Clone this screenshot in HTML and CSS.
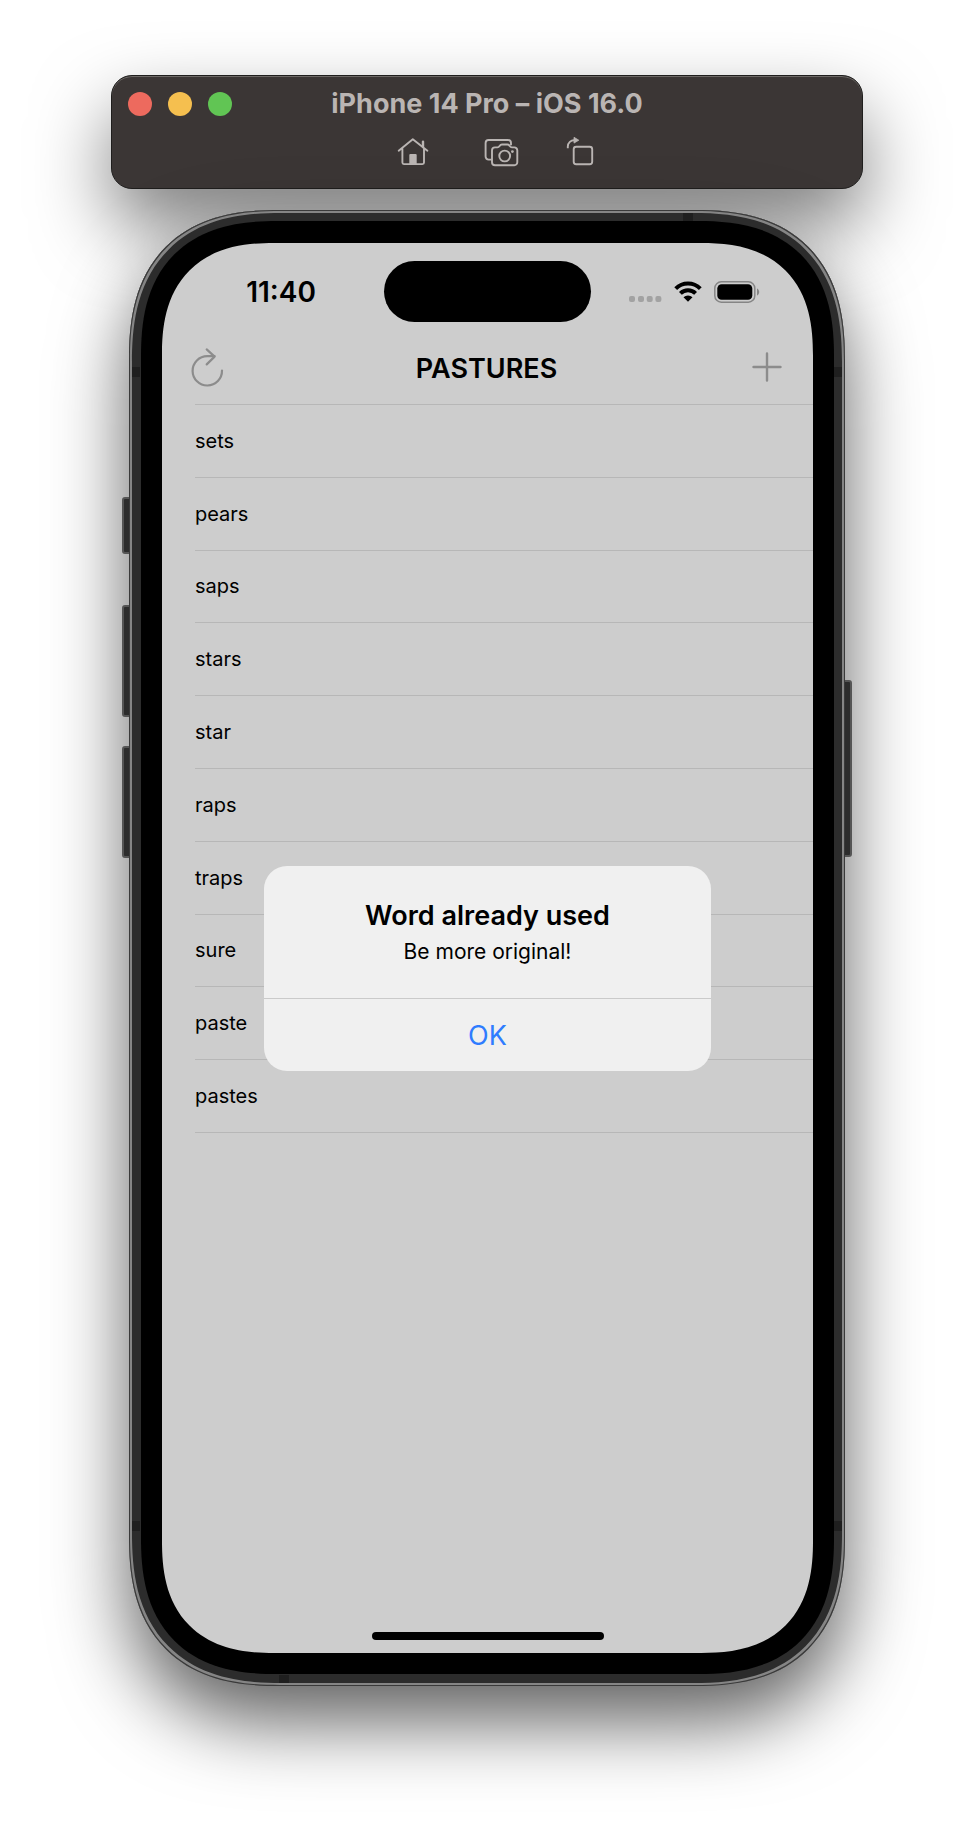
FILE: index.html
```html
<!DOCTYPE html>
<html lang="en">
<head>
<meta charset="utf-8">
<meta name="viewport" content="width=device-width, initial-scale=1">
<title>iPhone 14 Pro – iOS 16.0</title>
<link rel="stylesheet" href="styles.css">
</head>
<body>
<main class="desktop">
  <header class="toolbar">
    <div class="titlebar">
      <div class="lights">
        <button class="light light-close" aria-label="Close"></button>
        <button class="light light-min" aria-label="Minimize"></button>
        <button class="light light-zoom" aria-label="Zoom"></button>
      </div>
      <h1 class="window-title">iPhone 14 Pro – iOS 16.0</h1>
    </div>
    <div class="tools">
      <button class="tool" aria-label="Home">
        <svg width="40" height="32" viewBox="0 0 40 32" fill="none" stroke="currentColor" stroke-width="1.9" stroke-linecap="round" stroke-linejoin="round"><path d="M1.7 14.7 15.8 3.2 30.4 14.7M5.4 12.5V26.6a1.5 1.5 0 0 0 1.5 1.5H25.5a1.5 1.5 0 0 0 1.5-1.5V12.5"/><path d="M12.3 28.5V19a1 1 0 0 1 1-1h5.4a1 1 0 0 1 1 1v9.5z" fill="currentColor" stroke="none"/><path d="M26 5.7v5.3" stroke-width="2.4"/></svg>
      </button>
      <button class="tool" aria-label="Screenshot">
        <svg width="35" height="32" viewBox="0 0 35 32" fill="none" stroke="currentColor" stroke-width="1.9" stroke-linejoin="round"><path d="M8.2 23.6H4.6a3 3 0 0 1-3-3V7a3 3 0 0 1 3-3H24a3 3 0 0 1 3 3v2.2"/><path d="M8 14.4a3 3 0 0 1 3-3h2.4c1 0 1.6-.5 2.2-1.4.6-.9 1.3-1.5 2.3-1.5h5.5c1 0 1.7.6 2.3 1.5.6.9 1.2 1.4 2.200 1.4h2.4a3 3 0 0 1 3 3v11.9a3 3 0 0 1-3 3H11a3 3 0 0 1-3-3z"/><circle cx="20.7" cy="20" r="5.4"/><circle cx="28.4" cy="15.6" r="1.4" fill="currentColor" stroke="none"/></svg>
      </button>
      <button class="tool" aria-label="Rotate">
        <svg width="28" height="32" viewBox="0 0 28 32" fill="none" stroke="currentColor" stroke-width="1.9"><rect x="7.7" y="10.8" width="18.5" height="17.5" rx="2.5"/><path d="M1.8 12.2V10.5A6.3 6.3 0 0 1 8.600 4.2"/><path d="M8 1.3 12.8 4.2 8 7.1z" fill="currentColor" stroke-width=".8" stroke-linejoin="round"/></svg>
      </button>
    </div>
  </header>

  <section class="phone" aria-label="iPhone simulator">
    <span class="key key-mute"></span>
    <span class="key key-up"></span>
    <span class="key key-down"></span>
    <span class="key key-power"></span>
    <div class="frame">
      <span class="band band-side band-left band-high"></span>
      <span class="band band-side band-right band-high"></span>
      <span class="band band-side band-left band-low"></span>
      <span class="band band-side band-right band-low"></span>
      <span class="band band-cap band-top"></span>
      <span class="band band-cap band-bottom"></span>
      <div class="bezel">
        <div class="screen">
          <div class="status">
            <time class="clock">11:40</time>
            <span class="island"></span>
            <div class="indicators">
              <svg width="34" height="22" viewBox="0 0 34 22" fill="#a2a2a2"><rect x="1" y="15" width="6" height="6" rx="2"/><rect x="10" y="15" width="6" height="6" rx="2"/><rect x="18.7" y="15" width="6" height="6" rx="2"/><rect x="27.4" y="15" width="6" height="6" rx="2"/></svg>
              <svg width="28" height="22" viewBox="0 0 28 22" fill="none" stroke="#000" stroke-width="4"><path d="M1.7 7.6A17.500 17.500 0 0 1 26.3 7.6"/><path d="M6.4 12.4A10.8 10.8 0 0 1 21.6 12.4"/><path d="M14 20.800 9.500 16.200a6.5 6.5 0 0 1 9 0z" fill="#000" stroke="none"/></svg>
              <svg width="46" height="22" viewBox="0 0 46 22"><rect x=".8" y=".8" width="40" height="20.400" rx="6.500" fill="none" stroke="#858585" stroke-width="1.5"/><rect x="3.3" y="3.3" width="35" height="15.400" rx="4.300"/><path d="M43 7.500c1.400.6 2.200 2 2.200 3.500s-.8 2.900-2.200 3.500z" fill="#858585"/></svg>
            </div>
          </div>
          <nav class="navbar">
            <button class="nav-button" aria-label="Restart">
              <svg width="33" height="40" viewBox="0 0 33 40" fill="none" stroke="#8c8c8c" stroke-width="2.200" stroke-linecap="round" stroke-linejoin="round"><path d="M31 23.500A14.700 14.700 0 1 1 16.300 9.100H23.500"/><path d="M15.700 2.400 23.600 9.600 15.700 17.400"/></svg>
            </button>
            <h2 class="nav-title">PASTURES</h2>
            <button class="nav-button" aria-label="Add word">
              <svg width="30" height="30" viewBox="0 0 30 30" fill="none" stroke="#8c8c8c" stroke-width="2.400" stroke-linecap="round"><path d="M15 1.500v27M1.500 15h27"/></svg>
            </button>
          </nav>
          <ul class="words">
            <li class="word">sets</li>
            <li class="word">pears</li>
            <li class="word">saps</li>
            <li class="word">stars</li>
            <li class="word">star</li>
            <li class="word">raps</li>
            <li class="word">traps</li>
            <li class="word">sure</li>
            <li class="word">paste</li>
            <li class="word">pastes</li>
          </ul>
          <span class="home-bar"></span>
          <div class="overlay">
            <div class="alert" role="alertdialog" aria-labelledby="alert-title" aria-describedby="alert-text">
              <div class="alert-body">
                <h3 class="alert-title" id="alert-title">Word already used</h3>
                <p class="alert-text" id="alert-text">Be more original!</p>
              </div>
              <button class="alert-action">OK</button>
            </div>
          </div>
        </div>
      </div>
    </div>
  </section>
</main>
</body>
</html>
```
FILE: styles.css
```css
* {
  box-sizing: border-box;
}

body {
  margin: 0;
  background: #fff;
  color: #000;
  font-family: Inter, "Liberation Sans", sans-serif;
}

h1, h2, h3, p, ul {
  margin: 0;
  padding: 0;
}

button {
  display: block;
  padding: 0;
  border: 0;
  background: none;
  color: inherit;
  font: inherit;
}

svg {
  display: block;
}

.desktop {
  display: flex;
  flex-direction: column;
  gap: 21px;
  padding: 75px 111px 150px;
  overflow: hidden;
}

/* Simulator window bar */
.toolbar {
  position: relative;
  display: flex;
  flex-direction: column;
  gap: 16px;
  height: 114px;
  padding: 12px 16px;
  border: 1px solid #1f1e1d;
  border-radius: 21px;
  background: #3b3635;
  color: #bab5b3;
  box-shadow: inset 0 1px 0 #6d6966, 0 36px 76px rgba(0, 0, 0, 0.5);
}

.titlebar {
  display: grid;
  grid-template-columns: 1fr auto 1fr;
  align-items: center;
  height: 32px;
}

.lights {
  display: flex;
  gap: 16px;
}

.light {
  width: 24px;
  height: 24px;
  border-radius: 50%;
}

.light-close { background: #ed6a5e; }
.light-min { background: #f5bf4f; }
.light-zoom { background: #61c554; }

.window-title {
  font-size: 27px;
  font-weight: 700;
  line-height: 30px;
}

.tools {
  display: flex;
  justify-content: center;
  gap: 47px;
  padding-left: 16px;
}

/* Device */
.phone {
  position: relative;
  margin: 0 18px;
  border-radius: 124px;
  box-shadow: 0 36px 76px rgba(0, 0, 0, 0.62);
}

.key {
  position: absolute;
  left: -7px;
  width: 10px;
  border: 2px solid #555;
  border-radius: 3px;
  background: #2c2c2c;
}

.key-mute { top: 287px; height: 57px; }
.key-up { top: 395px; height: 112px; }
.key-down { top: 536px; height: 112px; }
.key-power { top: 470px; right: -7px; left: auto; height: 177px; }

.frame {
  position: relative;
  padding: 11px 11px 12px 12px;
  border-radius: 124px;
  background: #2c2c2c;
  box-shadow: inset 0 0 0 1px #3a3a3a, inset 0 0 0 3px #858585;
}

.band {
  position: absolute;
  background: #1f1f1f;
}

.band-side { width: 8px; height: 10px; }
.band-cap { width: 10px; height: 8px; }
.band-left { left: 3px; }
.band-right { right: 3px; }
.band-high { top: 157px; }
.band-low { bottom: 155px; }
.band-top { top: 3px; right: 152px; }
.band-bottom { bottom: 3px; left: 150px; }

.bezel {
  position: relative;
  padding: 22px 21px 21px;
  border-radius: 113px;
  background: #000;
}

.screen {
  position: relative;
  display: flex;
  flex-direction: column;
  min-height: 1410px;
  padding-bottom: 13px;
  border-radius: 94px;
  background: #cdcdcd;
  overflow: hidden;
}

/* Continuous corners where the browser can draw them */
@supports (corner-shape: superellipse(1.3)) {
  .phone,
  .frame,
  .bezel,
  .screen {
    corner-shape: superellipse(1.3);
  }

  .phone,
  .frame { border-radius: 150px; }
  .bezel { border-radius: 136px; }
  .screen { border-radius: 112px; }
}

.status {
  display: grid;
  grid-template-columns: 1fr 207px 1fr;
  align-items: center;
  padding-top: 18px;
}

.clock {
  padding-left: 16px;
  font-size: 28px;
  font-weight: 600;
  line-height: 32px;
  text-align: center;
}

.island {
  height: 61px;
  border-radius: 31px;
  background: #000;
}

.indicators {
  display: flex;
  justify-content: center;
  gap: 12px;
  padding-right: 16px;
}

.navbar {
  display: grid;
  grid-template-columns: 1fr auto 1fr;
  align-items: center;
  height: 82px;
  padding: 8px 31px 0 29px;
}

.nav-button:last-child {
  justify-self: end;
}

.nav-title {
  padding-top: 4px;
  font-size: 27px;
  font-weight: 600;
  line-height: 32px;
}

.words {
  display: grid;
  grid-auto-rows: 1fr;
  min-height: 729px;
  margin-left: 33px;
  border-top: 1px solid #b7b7b7;
  list-style: none;
}

.word {
  display: flex;
  align-items: center;
  border-bottom: 1px solid #b7b7b7;
  font-size: 20px;
  line-height: 24px;
}

.home-bar {
  width: 232px;
  height: 8px;
  margin: auto auto 0;
  border-radius: 4px;
  background: #000;
}

/* Alert */
.overlay {
  position: absolute;
  inset: 0;
  display: flex;
  align-items: center;
  justify-content: center;
  padding-top: 41px;
}

.alert {
  width: 447px;
  border-radius: 23px;
  background: #f0f0f0;
  text-align: center;
  overflow: hidden;
}

.alert-body {
  padding: 32px 24px 30px;
}

.alert-title {
  font-size: 27px;
  font-weight: 600;
  line-height: 36px;
}

.alert-text {
  padding-top: 2px;
  font-size: 21px;
  line-height: 32px;
}

.alert-action {
  width: 100%;
  height: 73px;
  padding-top: 2px;
  border-top: 1px solid #cacaca;
  color: #2f7cff;
  font-size: 27px;
  line-height: 36px;
}
```
